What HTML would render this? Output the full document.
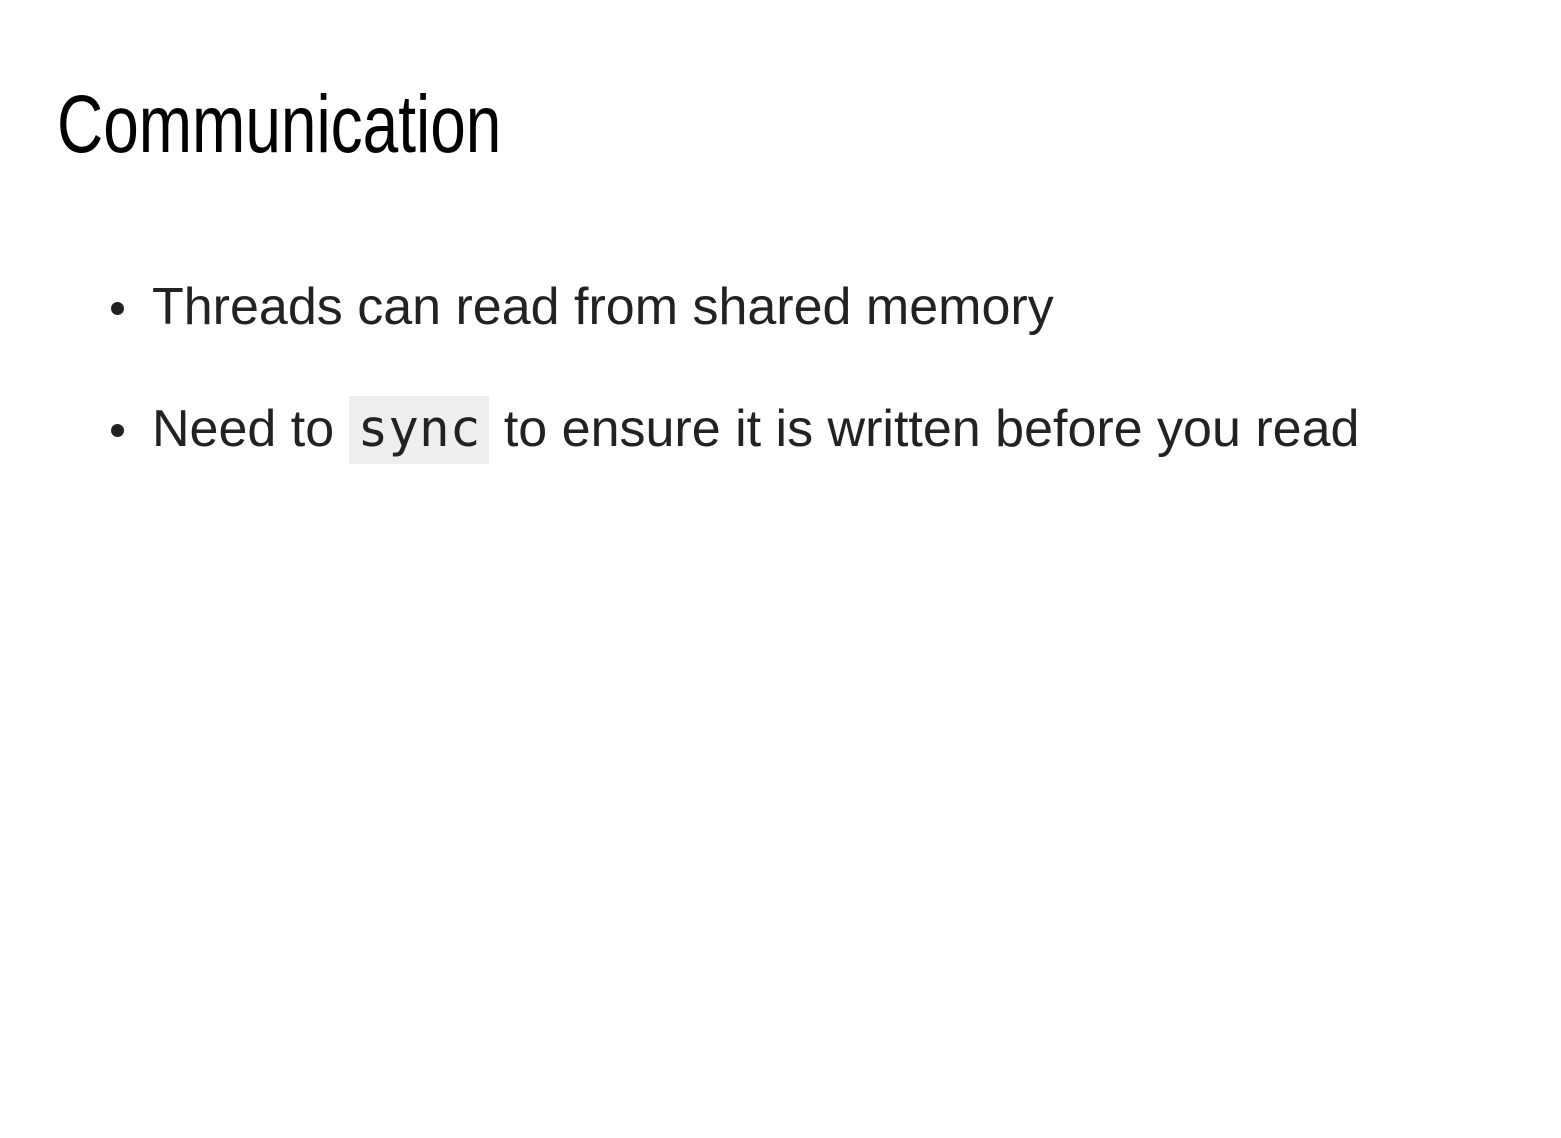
<!DOCTYPE html>
<html><head><style>
html,body{margin:0;padding:0;background:#fff;width:1561px;height:1138px;overflow:hidden}
.t{position:absolute;left:57px;top:75px;font:82px "Liberation Sans",sans-serif;color:#000;transform:scaleX(0.78);transform-origin:0 0;white-space:nowrap;line-height:100px}
.l{position:absolute;left:152px;font:52px "Liberation Sans",sans-serif;color:#222;white-space:nowrap;line-height:60px}
.b{position:absolute;width:13px;height:13px;border-radius:50%;background:#222;left:111px}
code{font-family:"DejaVu Sans Mono",monospace;font-size:51px;background:#eee;padding:4px 9px 5px}
</style></head><body>
<div class="t">Communication</div>
<div class="b" style="top:302px"></div>
<div class="l" style="top:277px">Threads can read from shared memory</div>
<div class="b" style="top:424px"></div>
<div class="l" style="top:399px">Need to <code>sync</code> to ensure it is written before you read</div>
</body></html>
